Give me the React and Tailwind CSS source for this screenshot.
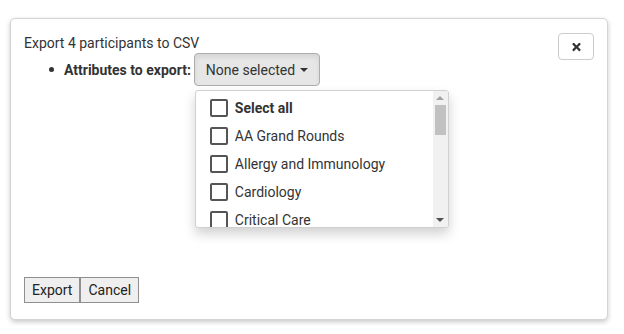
import { FaTimes } from "react-icons/fa";

const options = ["AA Grand Rounds", "Allergy and Immunology", "Cardiology", "Critical Care"];

function Option({ label, bold }) {
  return (
    <li className="flex items-center h-[28px] pl-[14px] whitespace-nowrap">
      <span className="w-[18px] h-[18px] border-2 border-[#555] rounded-[2px] bg-white shrink-0" />
      <span className={"ml-[7px] text-[14px] leading-[20px] text-[#333] " + (bold ? "font-bold" : "")}>
        {label}
      </span>
    </li>
  );
}

function Scrollbar() {
  return (
    <div className="w-[15px] h-full bg-[#f1f1f1] flex flex-col items-center shrink-0">
      <div className="h-[14px] flex items-center justify-center">
        <span className="w-0 h-0 border-l-[4px] border-r-[4px] border-b-[4px] border-l-transparent border-r-transparent border-b-[#a3a3a3]" />
      </div>
      <div className="w-[11px] h-[30px] bg-[#c1c1c1]" />
      <div className="mt-auto h-[14px] flex items-center justify-center">
        <span className="w-0 h-0 border-l-[4px] border-r-[4px] border-t-[4px] border-l-transparent border-r-transparent border-t-[#505050]" />
      </div>
    </div>
  );
}

export default function App() {
  return (
    <div className="w-[624px] h-[334px] bg-white pt-[18px] pl-[10px] font-['Roboto',sans-serif] text-[14px] leading-[20px] text-[#333]">
      <div className="w-[598px] h-[302px] bg-white border border-[#d4d4d4] rounded-[5px] shadow-[0_2px_5px_rgba(0,0,0,0.22)] flex flex-col px-[13px] pt-[14px] pb-[16px]">
        <div className="flex items-start justify-between">
          <div>
            <p>Export 4 participants to CSV</p>
            <div className="flex items-center h-[33px]">
              <span className="ml-[25px] w-[5px] h-[5px] rounded-full bg-[#333]" />
              <span className="ml-[10px] font-bold">Attributes to export:</span>
              <div className="relative ml-[3px]">
                <button className="h-[33px] px-[11px] bg-[#e6e6e6] border border-[#adadad] rounded-[4px] flex items-center text-[#333] shadow-[inset_0_3px_5px_rgba(0,0,0,0.08)]">
                  None selected
                  <span className="ml-[5px] w-0 h-0 border-l-[4px] border-r-[4px] border-t-[4px] border-l-transparent border-r-transparent border-t-[#333]" />
                </button>
                <div className="absolute left-[1px] top-[37px] w-[254px] h-[138px] bg-white border border-[#d0d0d0] rounded-[3px] shadow-[0_6px_12px_rgba(0,0,0,0.18)] overflow-hidden z-10 flex">
                  <ul className="flex-1 pt-[3px] overflow-hidden">
                    <Option label="Select all" bold />
                    {options.map((o) => (
                      <Option key={o} label={o} />
                    ))}
                  </ul>
                  <Scrollbar />
                </div>
              </div>
            </div>
          </div>
          <button className="w-[36px] h-[27px] border border-[#ccc] rounded-[4px] bg-white flex items-center justify-center text-[#333]">
            <FaTimes className="w-[11px] h-[12px]" />
          </button>
        </div>
        <div className="mt-auto flex">
          <button className="px-[7px] py-[2px] bg-[#efefef] border border-[#8f8f8f] text-[#222] leading-[20px]">
            Export
          </button>
          <button className="px-[7px] py-[2px] bg-[#efefef] border border-[#8f8f8f] text-[#222] leading-[20px]">
            Cancel
          </button>
        </div>
      </div>
    </div>
  );
}
